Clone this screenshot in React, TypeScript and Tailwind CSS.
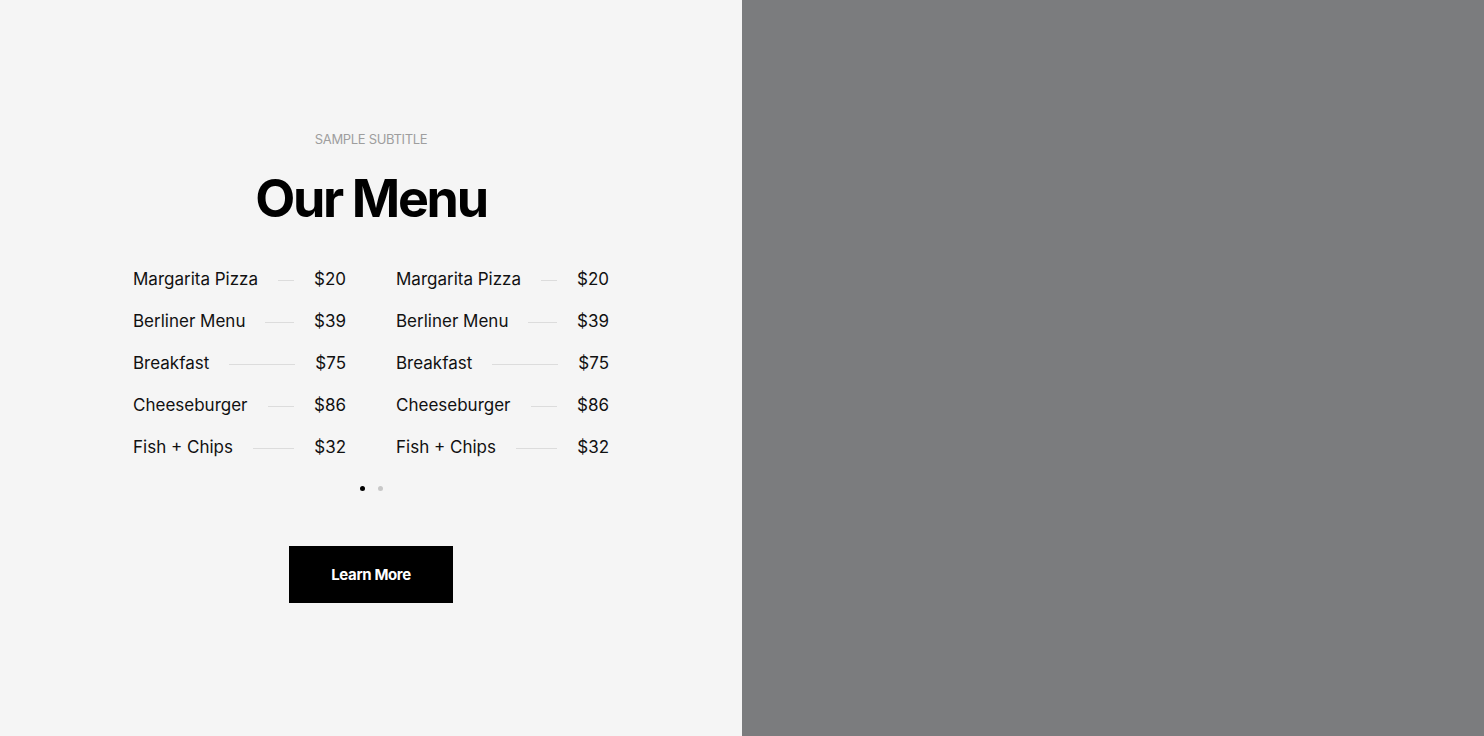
const items = [
  { name: 'Margarita Pizza', price: '$20' },
  { name: 'Berliner Menu', price: '$39' },
  { name: 'Breakfast', price: '$75' },
  { name: 'Cheeseburger', price: '$86' },
  { name: 'Fish + Chips', price: '$32' },
]

function MenuColumn() {
  return (
    <div className="flex w-[213px] flex-col gap-[20px]">
      {items.map((item) => (
        <div key={item.name} className="flex h-[22px] items-center text-[17px] text-[#111]">
          <span className="whitespace-nowrap">{item.name}</span>
          <span className="mx-5 h-px flex-1 bg-[#dcdcdc]" />
          <span>{item.price}</span>
        </div>
      ))}
    </div>
  )
}

export default function App() {
  return (
    <div
      className="flex h-[736px] w-full"
      style={{ fontFamily: 'Inter, "Noto Sans", sans-serif' }}
    >
      {/* Left panel */}
      <div className="flex w-[742px] flex-col items-center bg-[#f5f5f5] pt-[131px]">
        <p className="text-[13px] leading-4 tracking-tight text-[#9e9e9e]">SAMPLE SUBTITLE</p>
        <h1 className="mt-[22px] text-[52px] leading-[60px] font-bold tracking-[-0.045em] text-black">
          Our Menu
        </h1>
        <div className="mt-[40px] flex gap-[50px]">
          <MenuColumn />
          <MenuColumn />
        </div>
        <div className="mt-[27px] flex gap-[13px]">
          <span className="h-[5px] w-[5px] rounded-full bg-black" />
          <span className="h-[5px] w-[5px] rounded-full bg-[#c8c8c8]" />
        </div>
        <button className="mt-[55px] h-[57px] w-[164px] bg-black pt-px text-[15px] font-bold tracking-tight text-white">
          Learn More
        </button>
      </div>

      {/* Right panel */}
      <div className="flex-1 bg-[#7b7c7e]" />
    </div>
  )
}
